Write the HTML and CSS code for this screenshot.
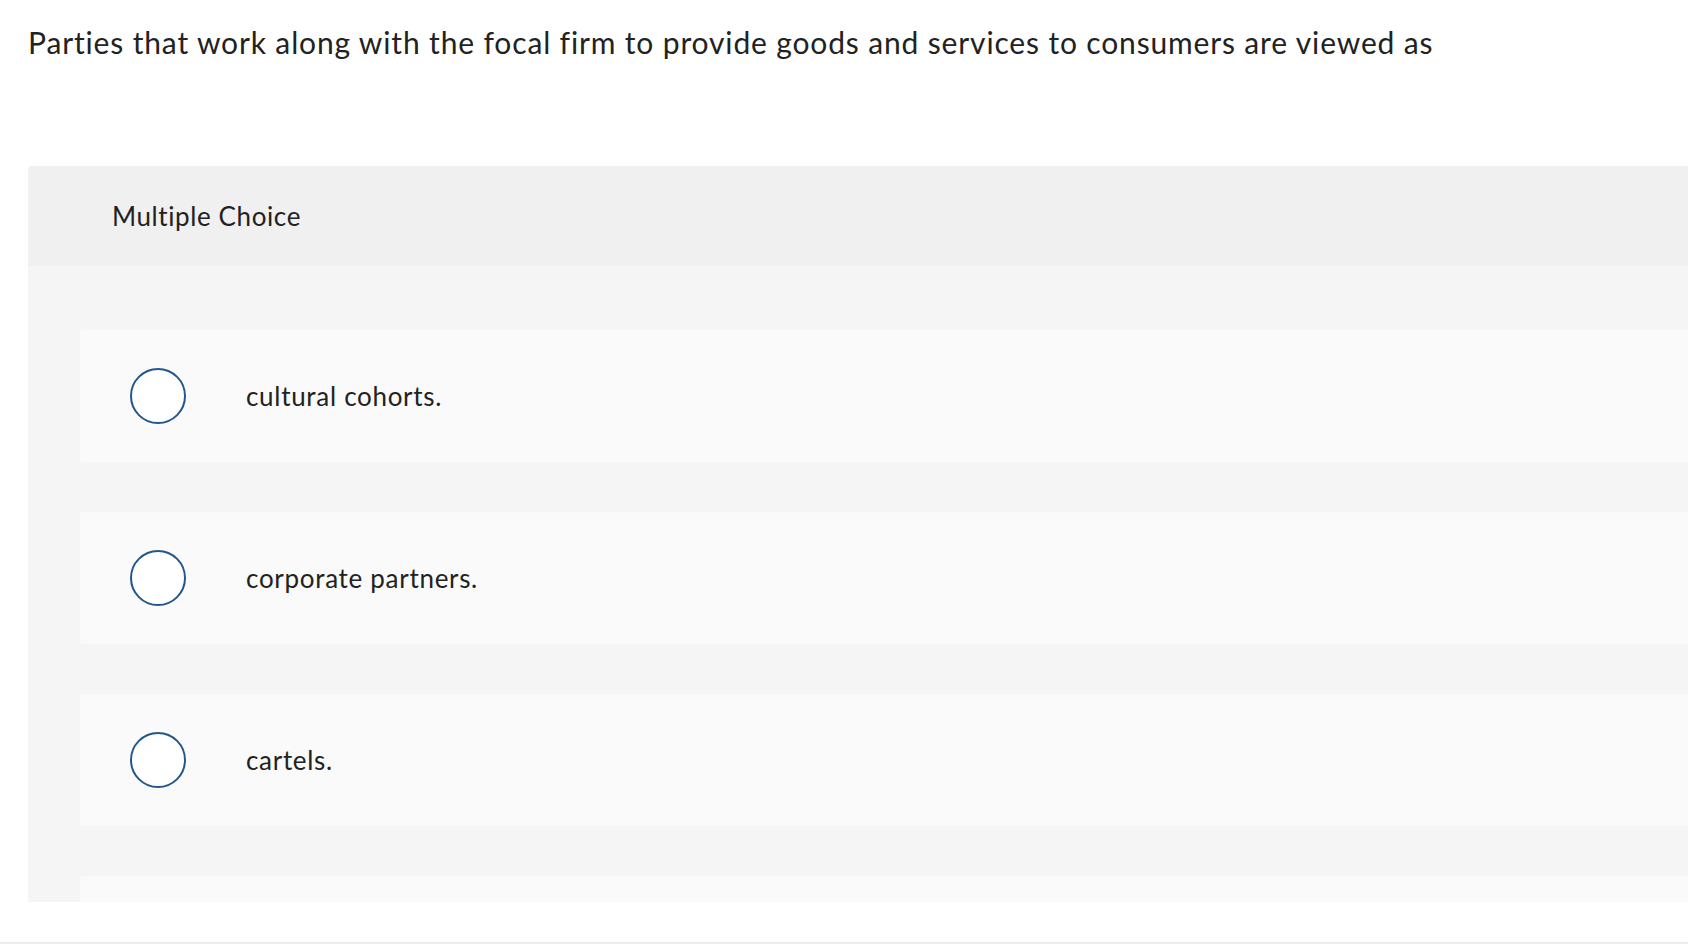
FILE: index.html
```html
<!DOCTYPE html>
<html lang="en">
<head>
<meta charset="utf-8">
<title>Multiple Choice</title>
<link rel="stylesheet" href="styles.css">
</head>
<body>
<div class="viewport">
  <main class="content">
    <p class="question">Parties that work along with the focal firm to provide goods and services to consumers are viewed as</p>
    <section class="panel">
      <header class="panel-header">Multiple Choice</header>
      <div class="options">
        <label class="option"><span class="radio"></span><span class="option-text">cultural cohorts.</span></label>
        <label class="option"><span class="radio"></span><span class="option-text">corporate partners.</span></label>
        <label class="option"><span class="radio"></span><span class="option-text">cartels.</span></label>
        <label class="option"><span class="radio"></span></label>
      </div>
    </section>
  </main>
  <div class="footer"></div>
</div>
</body>
</html>
```
FILE: styles.css
```css
html, body {
  margin: 0;
  padding: 0;
  background: #ffffff;
}
body {
  font-family: Lato, "Noto Sans", "Liberation Sans", sans-serif;
  color: #222222;
}
.viewport {
  width: 1688px;
  height: 944px;
  overflow: hidden;
}
.content {
  height: 902px;
  overflow: hidden;
}
.question {
  margin: 0;
  padding: 22px 0 0 28px;
  font-size: 30px;
  line-height: 40px;
  letter-spacing: 0.85px;
  color: #222;
}
.panel {
  margin: 104px 0 0 28px;
  background: #f5f5f5;
  border-radius: 4px 0 0 0;
}
.panel-header {
  height: 100px;
  display: flex;
  align-items: center;
  padding-left: 84px;
  background: #f0f0f0;
  border-radius: 4px 0 0 0;
  font-size: 26px;
  letter-spacing: 0.6px;
}
.options {
  display: flex;
  flex-direction: column;
  gap: 50px;
  padding: 64px 0 40px 52px;
}
.option {
  height: 132px;
  display: flex;
  align-items: center;
  padding-left: 50px;
  background: #fafafa;
  border-radius: 4px 0 0 4px;
  font-size: 26px;
  letter-spacing: 0.7px;
}
.radio {
  box-sizing: border-box;
  width: 56px;
  height: 56px;
  border: 2px solid #22578c;
  border-radius: 50%;
  background: #ffffff;
  flex: none;
}
.option-text {
  margin-left: 60px;
}
.footer {
  height: 40px;
  border-bottom: 2px solid #ececec;
}
```
